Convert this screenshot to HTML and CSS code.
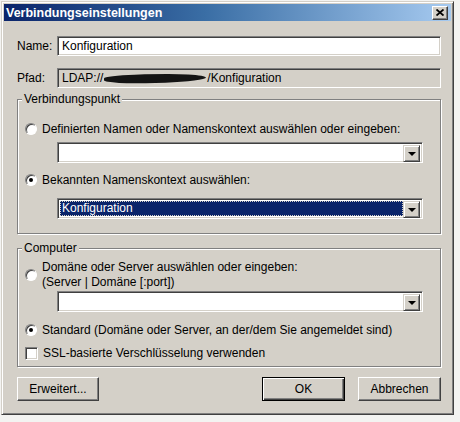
FILE: index.html
```html
<!DOCTYPE html>
<html lang="de">
<head>
    <meta charset="UTF-8">
    <title>Verbindungseinstellungen</title>
    <link rel="stylesheet" href="styles.css">
</head>
<body>
    <div class="window">
        <div class="titlebar">
            <span class="title">Verbindungseinstellungen</span>
            <span class="close-btn">
                <svg width="8" height="7" viewBox="0 0 8 7">
                    <path d="M0.5 0.5 L7.5 6.5 M7.5 0.5 L0.5 6.5" stroke="#000" stroke-width="1.8" fill="none"/>
                </svg>
            </span>
        </div>
        <div class="dialog">
            <div class="field-row">
                <label class="field-label">Name:</label>
                <div class="edit">Konfiguration</div>
            </div>
            <div class="field-row row-path">
                <label class="field-label">Pfad:</label>
                <div class="edit readonly">LDAP://<span class="redacted"></span>/Konfiguration</div>
            </div>

            <fieldset class="group group-point">
                <legend>Verbindungspunkt</legend>
                <div class="option first"><span class="radio"></span>Definierten Namen oder Namenskontext auswählen oder eingeben:</div>
                <div class="combo">
                    <div class="combo-value"></div>
                    <span class="drop-btn"><span class="arrow"></span></span>
                </div>
                <div class="option second"><span class="radio checked"></span>Bekannten Namenskontext auswählen:</div>
                <div class="combo wide">
                    <div class="combo-value selected"><span class="focus">Konfiguration</span></div>
                    <span class="drop-btn"><span class="arrow"></span></span>
                </div>
            </fieldset>

            <fieldset class="group group-computer">
                <legend>Computer</legend>
                <div class="option multi"><span class="radio"></span><span class="option-text">Domäne oder Server auswählen oder eingeben:<br>(Server | Domäne [:port])</span></div>
                <div class="combo tight">
                    <div class="combo-value"></div>
                    <span class="drop-btn"><span class="arrow"></span></span>
                </div>
                <div class="option standard"><span class="radio checked"></span>Standard (Domäne oder Server, an der/dem Sie angemeldet sind)</div>
                <div class="option ssl"><span class="checkbox"></span>SSL-basierte Verschlüsselung verwenden</div>
            </fieldset>

            <div class="buttons">
                <button class="btn btn-left">Erweitert...</button>
                <button class="btn btn-default">OK</button>
                <button class="btn">Abbrechen</button>
            </div>
        </div>
    </div>
</body>
</html>
```

FILE: styles.css
```css
body {
    margin: 0;
    background: #f3f3f1;
    font-family: "Liberation Sans", Arial, sans-serif;
    font-size: 12px;
    color: #000;
}

.window {
    box-sizing: border-box;
    width: 453px;
    height: 414px;
    margin: 1px 0 0 1px;
    padding: 2px;
    background: #d4d0c8;
    border: 1px solid;
    border-color: #d4d0c8 #404040 #404040 #d4d0c8;
    box-shadow: inset 1px 1px 0 #fff, inset -1px -1px 0 #808080;
}

.titlebar {
    height: 17px;
    display: flex;
    align-items: center;
    justify-content: space-between;
    padding: 0 3px 0 2px;
    background: linear-gradient(to right, #0a246a, #3a6ea5 45%, #a6caf0);
}

.title {
    color: #fff;
    font-weight: bold;
    font-size: 12.5px;
}

.close-btn {
    box-sizing: border-box;
    width: 16px;
    height: 14px;
    display: flex;
    align-items: center;
    justify-content: center;
    background: #d4d0c8;
    border: 1px solid;
    border-color: #fff #404040 #404040 #fff;
    box-shadow: inset -1px -1px 0 #808080;
}

.dialog {
    padding: 0 10px 0 13px;
}

.field-row {
    display: flex;
    align-items: center;
    margin-top: 15px;
}

.row-path {
    margin-top: 12px;
}

.field-label {
    width: 40px;
    flex-shrink: 0;
}

.edit {
    box-sizing: border-box;
    flex: 1;
    height: 20px;
    padding: 0 4px;
    display: flex;
    align-items: center;
    background: #fff;
    border: 1px solid;
    border-color: #808080 #fff #fff #808080;
    box-shadow: inset 1px 1px 0 #404040, inset -1px -1px 0 #d4d0c8;
}

.edit.readonly {
    background: #d4d0c8;
}

.redacted {
    display: inline-block;
    width: 102px;
    height: 9px;
    margin: 0 1px;
    background: #141414;
    border-radius: 30% 60% 40% 50%;
    transform: rotate(-2deg);
}

.group {
    margin: 4px 0 0;
    padding: 0 17px 14px 7px;
    min-width: 0;
    border: 1px solid #808080;
    box-shadow: 1px 1px 0 #fff, inset 1px 1px 0 #fff;
}

.group legend {
    padding: 0 2px;
    margin-left: -3px;
    line-height: 14px;
    background: #d4d0c8;
}

.group-computer {
    margin-top: 7px;
    padding-bottom: 6px;
}

.option {
    display: flex;
    align-items: center;
    height: 14px;
}

.option.first {
    margin-top: 16px;
}

.option.second {
    margin-top: 10px;
}

.option.multi {
    height: auto;
    margin-top: 5px;
    line-height: 15px;
}

.option.standard {
    margin-top: 11px;
}

.option.ssl {
    margin-top: 9px;
}

.radio {
    box-sizing: border-box;
    position: relative;
    width: 12px;
    height: 12px;
    margin-right: 5px;
    flex-shrink: 0;
    border-radius: 50%;
    background: #fff;
    border: 1px solid;
    border-color: #808080 #fff #fff #808080;
    box-shadow: inset 1px 1px 0 #404040;
}

.radio.checked::after {
    content: "";
    position: absolute;
    left: 3px;
    top: 3px;
    width: 4px;
    height: 4px;
    border-radius: 50%;
    background: #000;
}

.checkbox {
    box-sizing: border-box;
    width: 13px;
    height: 13px;
    margin-right: 5px;
    flex-shrink: 0;
    background: #fff;
    border: 1px solid;
    border-color: #808080 #fff #fff #808080;
    box-shadow: inset 1px 1px 0 #404040, inset -1px -1px 0 #d4d0c8;
}

.combo {
    box-sizing: border-box;
    display: flex;
    height: 21px;
    margin: 6px 0 0 32px;
    padding: 2px;
    background: #fff;
    border: 1px solid;
    border-color: #808080 #fff #fff #808080;
    box-shadow: inset 1px 1px 0 #404040, inset -1px -1px 0 #d4d0c8;
}

.combo.wide {
    margin-top: 11px;
}

.combo.tight {
    margin-top: 1px;
}

.combo-value {
    flex: 1;
    display: flex;
    align-items: center;
}

.combo-value.selected {
    background: #0a246a;
    color: #fff;
}

.focus {
    flex: 1;
    padding-left: 2px;
    line-height: 15px;
    outline: 1px dotted #d4d0c8;
    outline-offset: -1px;
}

.drop-btn {
    box-sizing: border-box;
    width: 17px;
    height: 17px;
    display: flex;
    align-items: center;
    justify-content: center;
    background: #d4d0c8;
    border: 1px solid;
    border-color: #d4d0c8 #404040 #404040 #d4d0c8;
    box-shadow: inset 1px 1px 0 #fff, inset -1px -1px 0 #808080;
}

.arrow {
    width: 0;
    height: 0;
    border-left: 4px solid transparent;
    border-right: 4px solid transparent;
    border-top: 4px solid #000;
}

.buttons {
    display: flex;
    margin-top: 10px;
}

.btn {
    box-sizing: border-box;
    width: 83px;
    height: 24px;
    margin-left: 13px;
    padding: 0;
    font-family: inherit;
    font-size: 12px;
    color: #000;
    background: #d4d0c8;
    border: 1px solid;
    border-color: #fff #404040 #404040 #fff;
    box-shadow: inset -1px -1px 0 #808080;
}

.btn-left {
    width: 82px;
    margin-left: 0;
    margin-right: auto;
}

.btn-default {
    border: 1px solid #000;
    box-shadow: inset 1px 1px 0 #fff, inset -1px -1px 0 #404040, inset -2px -2px 0 #808080;
}
```
